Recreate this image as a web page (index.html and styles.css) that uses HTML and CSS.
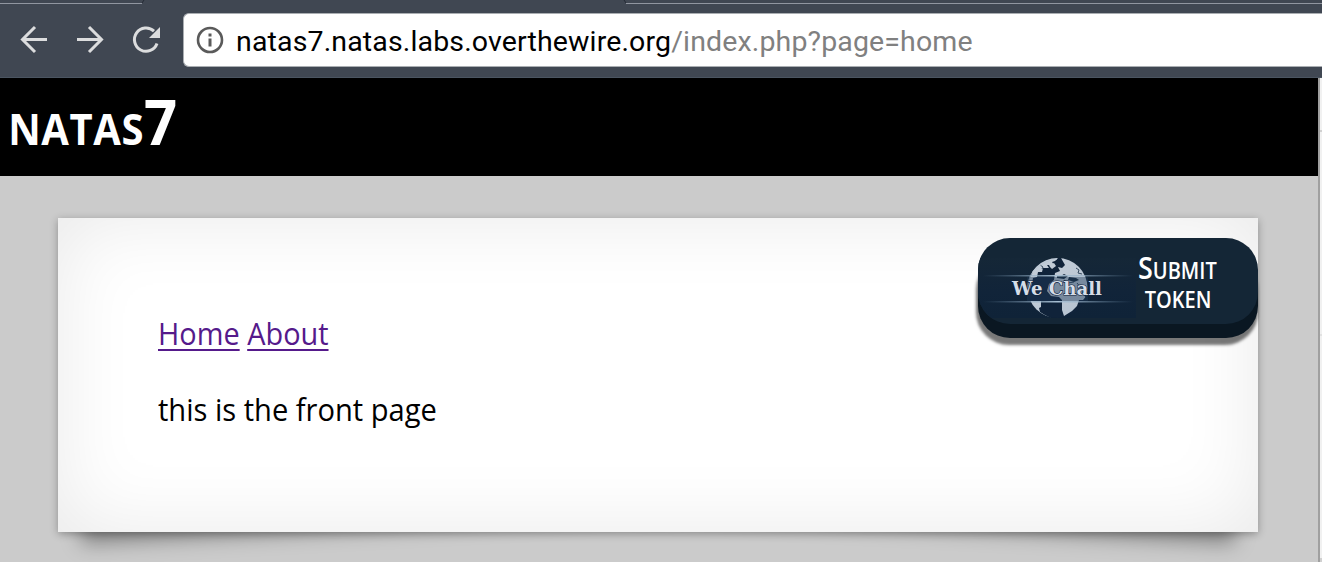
FILE: index.html
```html
<!DOCTYPE html>
<html lang="en">
<head>
<meta charset="utf-8">
<title>natas7</title>
<link rel="stylesheet" href="styles.css">
</head>
<body>
<header class="browser">
  <svg class="tab-edge" width="1322" height="5" viewBox="0 0 1322 5"><path d="M0 3.5H142M626 3.5H1322" stroke="#9196a0"/><path d="M142 3L144 0M626 3L624 0" stroke="#252b35"/></svg>
  <nav class="controls">
    <svg width="183" height="73" viewBox="0 5 183 73" fill="none" stroke="#dcddde" stroke-width="3">
      <path d="M47 39.5H23M35 27L22.5 39.5L35 52"/>
      <path d="M77 39.5H101M89 27L101.5 39.5L89 52"/>
      <path d="M154 31.2A11.6 11.6 0 1 0 157 43.5"/>
      <path d="M160 27V38H149Z" fill="#dcddde" stroke="none"/>
    </svg>
  </nav>
  <div class="address">
    <svg class="info" width="28" height="28" viewBox="0 0 28 28"><circle cx="14" cy="14" r="12" fill="none" stroke="#5a5a5a" stroke-width="2.6"/><path d="M12.5 7.5h3v3h-3zM12.5 12.5h3v8h-3z" fill="#5a5a5a"/></svg>
    <span class="url">natas7.natas.labs.overthewire.org<span class="path">/index.php?page=home</span></span>
  </div>
</header>
<div class="viewport">
  <main class="page">
    <h1 class="title"><span class="word">NATAS</span><span class="level">7</span></h1>
    <section class="content">
      <p class="links"><a href="#">Home</a> <a href="#">About</a></p>
      <p class="message">this is the front page</p>
      <div class="submit">
        <svg class="logo" width="158" height="60" viewBox="0 0 158 60">
          <defs>
            <linearGradient id="band" x2="0" y2="1"><stop stop-color="#152737"/><stop offset=".55" stop-color="#112439"/><stop offset="1" stop-color="#0f2338"/></linearGradient>
            <linearGradient id="glow"><stop stop-color="#6685a0" stop-opacity="0"/><stop offset=".5" stop-color="#a9c1d5"/><stop offset="1" stop-color="#6685a0" stop-opacity="0"/></linearGradient>
            <linearGradient id="land" x1="0" y1="0" x2="1" y2="1"><stop stop-color="#c5ced9"/><stop offset="1" stop-color="#b5c2d0"/></linearGradient>
            <clipPath id="ball"><circle cx="79.5" cy="30" r="30"/></clipPath>
          </defs>
          <rect width="158" height="60" fill="url(#band)"/>
          <g clip-path="url(#ball)">
            <circle cx="79.5" cy="30" r="30" fill="#10233a"/>
            <path fill="url(#land)" d="M49 29L51 15L61 5L72 0H80L77 3L74 4L76 7L69 7L71 10L65 10L64 14L60 14L59 19L55 20L54 26L52 31ZM71 7L76 5L78 8L74 11L72 9ZM83 0H94L104 5L112 15L110 36L105 42H101L99 48L94 53L86 58L84 52L84 42L81 39L73 38L69 33L71 26L76 22L77 15L82 13L80 9L84 10L87 7ZM49 43H63L63 49L61 50L62 54L67 57L73 60H62L50 50Z"/>
            <path fill="#14283c" d="M79 17l4 1 3-2 4 2-4 3-7-1zM91 19l7 1 3 2-5 2-6-2zM104 34l3-4 3 1-2 9z"/>
            <path d="M98 10l3 2-1 3 4 1M62 7l3 2-1 2M86 22l4 3 6-1M99 25l4 5 4-2" fill="none" stroke="#34495e" stroke-width="1"/>
            <path d="M54 14Q66 2 79 1" fill="none" stroke="#bac7d3"/>
          </g>
          <path d="M50 36Q48 25 54 15" fill="none" stroke="#8295a8"/>
          <rect x="49" y="19" width="61" height="24" fill="#1d3a58" opacity=".43"/>
          <rect x="5" y="17" width="150" height="1.5" fill="url(#glow)"/>
          <rect x="5" y="43" width="150" height="1.5" fill="url(#glow)"/>
          <text class="logo-text" x="34" y="37" textLength="90" lengthAdjust="spacingAndGlyphs">We Chall</text>
        </svg>
        <div class="token"><span class="line first"><span class="initial">S</span>UBMIT</span><span class="line">TOKEN</span></div>
      </div>
    </section>
  </main>
  <aside class="edge"><svg width="2" height="484" viewBox="0 0 2 484"><path fill="#d0d0d0" d="M0 52h2v2H0zM0 480h2v4H0z"/><path fill="#e2e2e2" d="M0 256h2v2H0z"/></svg></aside>
</div>
</body>
</html>
```
FILE: styles.css
```css
* { box-sizing: border-box; }
body { margin: 0; width: 1322px; height: 562px; overflow: hidden; background: #cbcbcb; font-family: "Open Sans", sans-serif; }
.browser { height: 78px; background: #404752; border-bottom: 1px solid #4b5561; display: grid; grid-template-columns: 183px 1fr; grid-template-rows: 5px 73px; }
.tab-edge { grid-column: 1 / 3; display: block; }
.controls { height: 73px; }
.controls svg { display: block; }
.address { height: 54px; margin-top: 8px; border: 1px solid #aaaeb2; border-right: 0; border-radius: 6px 0 0 6px; background: #fff; display: flex; align-items: center; padding-left: 12px; }
.info { flex: none; }
.url { font: 28.5px/40px Roboto, sans-serif; color: #000; margin: 3px 0 0 12px; white-space: nowrap; letter-spacing: .14px; }
.path { color: #808080; }
.viewport { display: grid; grid-template-columns: 1318px 4px; height: 484px; }
.page { position: relative; z-index: 0; background: #cbcbcb; overflow: hidden; }
.title { margin: 0; height: 98px; padding: 3px 0 0 9px; background: #000; color: #fff; font-weight: 700; line-height: 79px; white-space: nowrap; transform: scaleX(.92); transform-origin: 0 0; box-shadow: 200px 0 0 #000; }
.word { font-size: 43.5px; letter-spacing: .6px; }
.level { font-size: 63px; font-weight: 700; }
.content { position: relative; margin: 42px 60px 0 58px; height: 314px; padding: 95px 0 0 100px; background: #fff; box-shadow: 0 2px 8px rgba(0,0,0,.3), inset 0 0 80px rgba(0,0,0,.09); }
.content::before, .content::after { content: ""; position: absolute; z-index: -2; bottom: 34px; width: 50%; height: 20%; max-width: 600px; box-shadow: 0 30px 20px rgba(0,0,0,.36); }
.content::before { left: 20px; transform: rotate(-3deg); }
.content::after { right: 20px; transform: rotate(3deg); }
.links, .message { margin: 0; font-size: 31px; line-height: 40px; white-space: nowrap; transform: scaleX(.938); transform-origin: 0 0; }
.links { transform: scaleX(.932); }
.links a { color: #551a8b; text-decoration-thickness: 2px; text-underline-offset: 4px; text-decoration-skip-ink: none; }
.message { margin-top: 36px; }
.submit { position: absolute; top: 20px; right: 0; width: 280px; height: 86px; overflow: hidden; border-radius: 32px; background: #142636; box-shadow: 0 14px 0 #0a1722, -1px 20px 3px 1px rgba(0,0,0,.53); display: flex; padding-top: 20px; }
.logo { flex: none; }
.logo-text { font: 700 19px "DejaVu Serif", serif; fill: #d5dde7; stroke: #10233a; stroke-width: 1.2px; paint-order: stroke; }
.token { width: 84px; padding-top: 2px; color: #fff; font-size: 23px; font-weight: 600; text-align: center; white-space: nowrap; transform: scaleX(.87); }
.line { display: block; height: 29px; line-height: 21px; }
.first { margin-left: -4px; }
.initial { font-size: 31px; line-height: 1px; }
.edge { background: #f1f1f1; border-left: 2px solid #a0a0a0; }
.edge svg { display: block; }
```
